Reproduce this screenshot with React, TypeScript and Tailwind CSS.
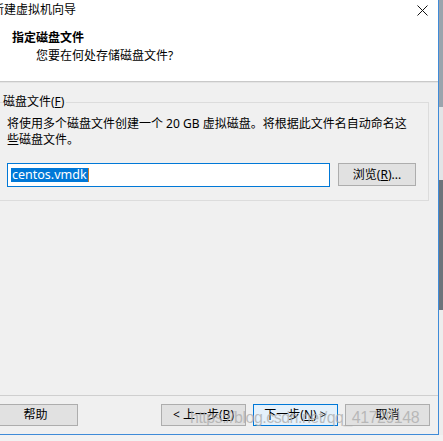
import React from "react";

const font = { fontFamily: '"Noto Sans","Noto Sans CJK SC",sans-serif' };

function Btn({ children, primary, className = "" }: { children: React.ReactNode; primary?: boolean; className?: string }) {
  return (
    <div
      className={
        "flex h-[22px] w-[85px] items-center justify-center border text-[12px] leading-[16px] text-black " +
        (primary ? "border-[#0078d7] bg-[#e5f1fb] " : "border-[#adadad] bg-[#e1e1e1] ") +
        className
      }
    >
      {children}
    </div>
  );
}

export default function App() {
  return (
    <div className="relative flex h-[441px] w-[443px] flex-col overflow-hidden bg-[#f2f2f2]" style={font}>
      <div className="flex">
        {/* window */}
        <div className="flex h-[435px] w-[439px] flex-col border-b border-r border-[#3f8bd8] bg-[#f0f0f0]">
          {/* header */}
          <div className="flex h-[81px] flex-col bg-white">
            <div className="flex items-start justify-between pt-[2px]">
              <div className="ml-[-8px] whitespace-nowrap text-[12px] leading-[16px] text-black">新建虚拟机向导</div>
              <svg className="mr-[10px] mt-[3px]" width="11" height="11" viewBox="0 0 11 11">
                <path d="M0.5 0.5 L10.5 10.5 M10.5 0.5 L0.5 10.5" stroke="#111" strokeWidth="1" fill="none" />
              </svg>
            </div>
            <div className="ml-[12px] mt-[12px] text-[12px] font-bold leading-[16px] text-black">指定磁盘文件</div>
            <div className="ml-[36px] mt-[2px] text-[12px] leading-[16px] text-black">您要在何处存储磁盘文件?</div>
          </div>
          <div className="h-[1px] bg-[#c9c9c9]" />
          <div className="h-[1px] bg-[#e4e4e4]" />
          {/* body */}
          <div className="flex flex-1 flex-col">
            <fieldset className="ml-[-10px] mt-[11px] h-[107px] w-[439px] border border-[#dcdcdc]">
              <legend className="ml-[12px] pr-[2px] text-[12px] leading-[16px] text-black">
                磁盘文件(<span className="underline">F</span>)
              </legend>
              <div className="pl-[16px]">
                <div className="mt-[6px] whitespace-nowrap text-[12px] leading-[16px] text-black">
                  将使用多个磁盘文件创建一个 20 GB 虚拟磁盘。将根据此文件名自动命名这
                  <br />
                  些磁盘文件。
                </div>
                <div className="mt-[15px] flex items-start">
                  <div className="flex h-[24px] w-[323px] items-center border border-[#0078d7] bg-white pl-[3px]">
                    <span className="bg-[#0078d7] px-[1px] text-[12.5px] leading-[14px] text-white">centos.vmdk</span>
                    <span className="h-[14px] w-[1px] bg-[#c87a2a]" />
                  </div>
                  <div className="ml-[8px] flex h-[23px] w-[78px] items-center justify-center border border-[#adadad] bg-[#e1e1e1] text-[12px] leading-[16px] text-black">
                    浏览(<span className="underline">R</span>)...
                  </div>
                </div>
              </div>
            </fieldset>
          </div>
          <div className="h-[1px] bg-[#cfcfcf]" />
          <div className="flex h-[38px] items-start justify-between pr-[8px] pt-[8px]">
            <Btn className="ml-[-7px] w-[84px]">帮助</Btn>
            <div className="flex gap-[7px]">
              <Btn>
                &lt; 上一步(<span className="underline">B</span>)
              </Btn>
              <Btn primary>
                下一步(<span className="underline">N</span>) &gt;
              </Btn>
              <Btn>取消</Btn>
            </div>
          </div>
        </div>
        {/* desktop strip */}
        <div className="flex w-[4px] flex-col">
          <div className="h-[107px] bg-[#9ba4ad]" />
          <div className="h-[73px] bg-[#e2e4e6]" />
          <div className="h-[130px] bg-[#6d747b]" />
          <div className="flex-1 bg-[#ededed]" />
        </div>
      </div>
      <div
        className="pointer-events-none absolute left-[190px] top-[406px] whitespace-nowrap text-[16px] leading-[24px] tracking-[-0.5px] text-[rgba(170,170,170,0.75)]"
        style={{ fontFamily: '"Liberation Sans",Arial,sans-serif' }}
      >
        https://blog.csdn.net/qq_41729148
      </div>
    </div>
  );
}
